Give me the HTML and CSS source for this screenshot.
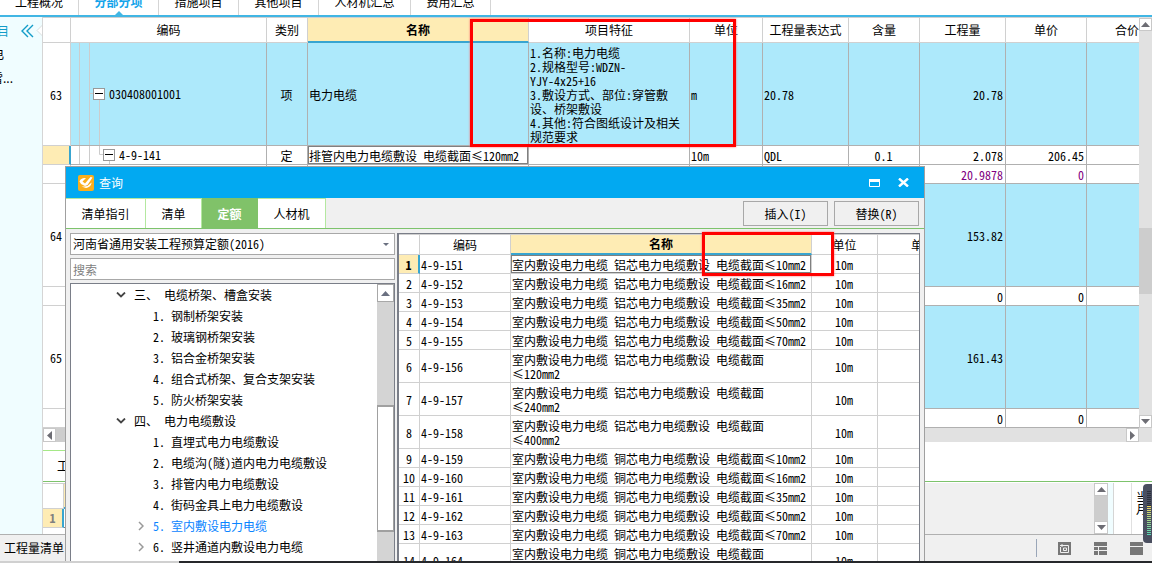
FILE: index.html
```
<!DOCTYPE html>
<html lang="zh-CN">
<head>
<meta charset="utf-8">
<title>分部分项</title>
<link rel="stylesheet" href="styles.css">
</head>
<body>
<div class="app">
  <nav class="tabs">
    <button class="tab first">工程概况</button>
    <button class="tab active">分部分项</button>
    <button class="tab">措施项目</button>
    <button class="tab">其他项目</button>
    <button class="tab wide">人材机汇总</button>
    <button class="tab">费用汇总</button>
  </nav>

  <div class="workspace">
    <aside class="side">
      <div class="side-head">
        <span class="side-title">项目</span>
        <svg class="collapse" width="22" height="18" viewBox="0 0 22 18"><path d="M7 3 1 9l6 6M12 3 6 9l6 6" fill="none" stroke="#129cc8" stroke-width="1.4"/><path d="M22 2.500l-6 6 6 6z" fill="#fff" stroke="#d8dede"/></svg>
      </div>
      <div class="side-item power">强电</div>
      <div class="side-item">防雷...</div>
    </aside>

    <main class="content">
      <div class="grid-area">
        <div class="grid-clip">
          <table class="bill">
            <colgroup><col class="b-no"><col class="b-code"><col class="b-kind"><col class="b-name"><col class="b-feat"><col class="b-unit"><col class="b-expr"><col class="b-cont"><col class="b-qty"><col class="b-price"><col class="b-price"></colgroup>
            <thead>
              <tr><th></th><th>编码</th><th>类别</th><th class="current">名称</th><th>项目特征</th><th>单位</th><th>工程量表达式</th><th>含量</th><th>工程量</th><th>单价</th><th>合价</th></tr>
            </thead>
            <tbody>
              <tr class="item"><td class="no">63</td>
                <td class="tree-cell"><div class="node"><svg width="38" height="102" viewBox="0 0 38 102"><path d="M8.500 0v102M18.500 0v102M18.500 50.500h4M28.500 57v45" stroke="#ccc" fill="none"/><rect x="22.500" y="45.500" width="11" height="11" fill="#fff" stroke="#999"/><path d="M24 50.500h8" stroke="#000"/></svg>030408001001</div></td>
                <td class="mid">项</td><td>电力电缆</td>
                <td class="feature">1.名称:电力电缆<br>2.规格型号:WDZN-<br>YJY-4x25+16<br>3.敷设方式、部位:穿管敷<br>设、桥架敷设<br>4.其他:符合图纸设计及相关<br>规范要求</td>
                <td>m</td><td>20.78</td><td></td><td class="num">20.78</td><td></td><td></td></tr>
              <tr class="line"><td class="no picked"></td>
                <td class="tree-cell"><div class="node"><svg width="48" height="18" viewBox="0 0 48 18"><path d="M8.500 0v18M18.500 0v18M28.500 0v8.500h4M38.500 14v4" stroke="#ccc" fill="none"/><rect x="32.500" y="3.500" width="11" height="11" fill="#fff" stroke="#999"/><path d="M34 8.500h8" stroke="#000"/></svg>4-9-141</div></td>
                <td class="mid">定</td><td class="focus">排管内电力电缆敷设 电缆截面<span class="le">≤</span>120mm2</td><td></td><td>10m</td><td>QDL</td><td class="mid">0.1</td><td class="num">2.078</td><td class="num">206.45</td><td></td></tr>
              <tr class="line locked"><td class="no"></td><td></td><td></td><td></td><td></td><td></td><td></td><td></td><td class="num">20.9878</td><td class="num">0</td><td></td></tr>
              <tr class="item"><td class="no">64</td><td></td><td></td><td></td><td></td><td></td><td></td><td></td><td class="num">153.82</td><td></td><td></td></tr>
              <tr class="line"><td class="no"></td><td></td><td></td><td></td><td></td><td></td><td></td><td></td><td class="num">0</td><td class="num">0</td><td></td></tr>
              <tr class="item"><td class="no">65</td><td></td><td></td><td></td><td></td><td></td><td></td><td></td><td class="num">161.43</td><td></td><td></td></tr>
              <tr class="line"><td class="no"></td><td></td><td></td><td></td><td></td><td></td><td></td><td></td><td class="num">0</td><td class="num">0</td><td></td></tr>
            </tbody>
          </table>
        </div>
        <div class="vbar">
          <button class="step" aria-label="向上"><svg width="9" height="5" viewBox="0 0 9 5"><path d="M0 5 4.500 0 9 5z" fill="#6d6d74"/></svg></button>
          <div class="track"><div class="thumb main-thumb"></div></div>
          <button class="step" aria-label="向下"><svg width="9" height="5" viewBox="0 0 9 5"><path d="M0 0 4.500 5 9 0z" fill="#6d6d74"/></svg></button>
        </div>
      </div>
      <div class="hbar">
        <button class="step" aria-label="向左"><svg width="5" height="9" viewBox="0 0 5 9"><path d="M5 0 0 4.500 5 9z" fill="#6d6d74"/></svg></button>
        <div class="htrack"><div class="hthumb"></div></div>
        <button class="step" aria-label="向右"><svg width="5" height="9" viewBox="0 0 5 9"><path d="M0 0 5 4.500 0 9z" fill="#6d6d74"/></svg></button>
      </div>
      <div class="sub-tabs"><button class="sub-tab">工料机显示</button></div>
      <div class="sub-body">
        <div class="mini">
          <div class="mini-row mini-head"><span class="mini-no"></span><span class="mini-name"></span></div>
          <div class="mini-row"><span class="mini-no on">1</span><span class="mini-cell"></span></div>
        </div>
        <div class="sub-fill"></div>
        <div class="vbar sub-bar">
          <button class="step" aria-label="向上"><svg width="9" height="5" viewBox="0 0 9 5"><path d="M0 5 4.500 0 9 5z" fill="#6d6d74"/></svg></button>
          <div class="track solid"></div>
          <button class="step" aria-label="向下"><svg width="9" height="5" viewBox="0 0 9 5"><path d="M0 0 4.500 5 9 0z" fill="#6d6d74"/></svg></button>
        </div>
        <div class="gutter"></div>
        <div class="note"><div class="note-in">当月</div></div>
      </div>
    </main>
  </div>

  <footer class="status">
    <span class="status-text">工程量清单</span>
    <span class="divider"></span>
    <svg class="view" width="13" height="13" viewBox="0 0 13 13"><rect width="13" height="13" fill="#777"/><path d="M4 2v3M2 3.500h8.500v7h-8V5M5.500 6h3v2.500h-3z" fill="none" stroke="#f0f0f0"/></svg>
    <svg class="view" width="13" height="13" viewBox="0 0 13 13" fill="#777"><path d="M0 0h13v4H0zM0 5h4v3H0zM5 5h8v3H5zM0 9h4v4H0zM5 9h8v4H5z"/></svg>
    <svg class="view" width="13" height="13" viewBox="0 0 13 13" fill="#777"><path d="M0 0h13v4H0zM0 5h13v8H0z"/></svg>
  </footer>
  <div class="edge"><div class="edge-light"></div></div>

  <section class="dialog">
    <header class="title">
      <svg width="16" height="16" viewBox="0 0 16 16"><rect width="16" height="16" rx="2" fill="#f9ae1c"/><path d="M1.500 6.500C2 4 5 2.500 8 3L4.500 6.500 7 8.500 12.500 2l2 .5-5 7.500-2.500 1-4-2zM3.500 11.500 8 13c3.500-.5 5.500-3 5.500-5.500L9.500 11l-3 .5z" fill="#fff"/></svg>
      <h1>查询</h1>
      <button class="win" aria-label="最大化"><svg width="11" height="8" viewBox="0 0 11 8"><path d="M.5.5h10v7H.5z" fill="none" stroke="#fff"/><path d="M0 0h11v3H0z" fill="#fff"/></svg></button>
      <button class="win" aria-label="关闭"><svg width="11" height="9" viewBox="0 0 11 9"><path d="M1 .5l9 8M10 .5l-9 8" stroke="#fff" stroke-width="2.400"/></svg></button>
    </header>
    <div class="dlg-tabs">
      <button class="dlg-tab t-guide">清单指引</button><button class="dlg-tab t-list">清单</button><button class="dlg-tab t-list on">定额</button><button class="dlg-tab t-res">人材机</button>
      <div class="actions"><button class="action">插入(I)</button><button class="action">替换(R)</button></div>
    </div>
    <div class="dlg-body">
      <div class="left">
        <div class="library-wrap"><select class="field library" aria-label="定额库"><option>河南省通用安装工程预算定额(2016)</option></select></div>
        <input class="field search" type="text" placeholder="搜索" aria-label="搜索">
        <div class="tree-box">
          <ul class="tree">
            <li class="chapter"><svg width="10" height="6" viewBox="0 0 10 6"><path d="M1 .5l4 4 4-4" fill="none" stroke="#444" stroke-width="1.800"/></svg>三、 电缆桥架、槽盒安装</li>
            <li class="section">1. 钢制桥架安装</li>
            <li class="section">2. 玻璃钢桥架安装</li>
            <li class="section">3. 铝合金桥架安装</li>
            <li class="section">4. 组合式桥架、复合支架安装</li>
            <li class="section">5. 防火桥架安装</li>
            <li class="chapter"><svg width="10" height="6" viewBox="0 0 10 6"><path d="M1 .5l4 4 4-4" fill="none" stroke="#444" stroke-width="1.800"/></svg>四、 电力电缆敷设</li>
            <li class="section">1. 直埋式电力电缆敷设</li>
            <li class="section">2. 电缆沟(隧)道内电力电缆敷设</li>
            <li class="section">3. 排管内电力电缆敷设</li>
            <li class="section">4. 街码金具上电力电缆敷设</li>
            <li class="section folder chosen"><svg width="6" height="10" viewBox="0 0 6 10"><path d="M1 1l4 4-4 4" fill="none" stroke="#999" stroke-width="1.500"/></svg>5. 室内敷设电力电缆</li>
            <li class="section folder"><svg width="6" height="10" viewBox="0 0 6 10"><path d="M1 1l4 4-4 4" fill="none" stroke="#999" stroke-width="1.500"/></svg>6. 竖井通道内敷设电力电缆</li>
          </ul>
          <div class="tree-bar">
            <button class="tree-up" aria-label="向上"><svg width="9" height="5" viewBox="0 0 9 5"><path d="M0 5 4.500 0 9 5z" fill="#6a7080"/></svg></button>
            <div class="tree-thumb"></div>
          </div>
        </div>
      </div>
      <div class="quota-box">
        <table class="quota">
          <colgroup><col class="q-no"><col class="q-code"><col class="q-name"><col class="q-unit"><col class="q-price"></colgroup>
          <thead><tr><th></th><th>编码</th><th class="current">名称</th><th>单位</th><th>单价</th></tr></thead>
          <tbody>
            <tr><td class="no picked">1</td><td>4-9-151</td><td class="focus">室内敷设电力电缆 铝芯电力电缆敷设 电缆截面<span class="le">≤</span>10mm2</td><td class="mid">10m</td><td></td></tr>
            <tr><td class="no">2</td><td>4-9-152</td><td>室内敷设电力电缆 铝芯电力电缆敷设 电缆截面<span class="le">≤</span>16mm2</td><td class="mid">10m</td><td></td></tr>
            <tr><td class="no">3</td><td>4-9-153</td><td>室内敷设电力电缆 铝芯电力电缆敷设 电缆截面<span class="le">≤</span>35mm2</td><td class="mid">10m</td><td></td></tr>
            <tr><td class="no">4</td><td>4-9-154</td><td>室内敷设电力电缆 铝芯电力电缆敷设 电缆截面<span class="le">≤</span>50mm2</td><td class="mid">10m</td><td></td></tr>
            <tr><td class="no">5</td><td>4-9-155</td><td>室内敷设电力电缆 铝芯电力电缆敷设 电缆截面<span class="le">≤</span>70mm2</td><td class="mid">10m</td><td></td></tr>
            <tr class="two"><td class="no">6</td><td>4-9-156</td><td>室内敷设电力电缆 铝芯电力电缆敷设 电缆截面<br><span class="le">≤</span>120mm2</td><td class="mid">10m</td><td></td></tr>
            <tr class="two"><td class="no">7</td><td>4-9-157</td><td>室内敷设电力电缆 铝芯电力电缆敷设 电缆截面<br><span class="le">≤</span>240mm2</td><td class="mid">10m</td><td></td></tr>
            <tr class="two"><td class="no">8</td><td>4-9-158</td><td>室内敷设电力电缆 铝芯电力电缆敷设 电缆截面<br><span class="le">≤</span>400mm2</td><td class="mid">10m</td><td></td></tr>
            <tr><td class="no">9</td><td>4-9-159</td><td>室内敷设电力电缆 铜芯电力电缆敷设 电缆截面<span class="le">≤</span>10mm2</td><td class="mid">10m</td><td></td></tr>
            <tr><td class="no">10</td><td>4-9-160</td><td>室内敷设电力电缆 铜芯电力电缆敷设 电缆截面<span class="le">≤</span>16mm2</td><td class="mid">10m</td><td></td></tr>
            <tr><td class="no">11</td><td>4-9-161</td><td>室内敷设电力电缆 铜芯电力电缆敷设 电缆截面<span class="le">≤</span>35mm2</td><td class="mid">10m</td><td></td></tr>
            <tr><td class="no">12</td><td>4-9-162</td><td>室内敷设电力电缆 铜芯电力电缆敷设 电缆截面<span class="le">≤</span>50mm2</td><td class="mid">10m</td><td></td></tr>
            <tr><td class="no">13</td><td>4-9-163</td><td>室内敷设电力电缆 铜芯电力电缆敷设 电缆截面<span class="le">≤</span>70mm2</td><td class="mid">10m</td><td></td></tr>
            <tr class="two"><td class="no">14</td><td>4-9-164</td><td>室内敷设电力电缆 铜芯电力电缆敷设 电缆截面<br><span class="le">≤</span>120mm2</td><td class="mid">10m</td><td></td></tr>
          </tbody>
        </table>
      </div>
    </div>
  </section>

  <div class="mark mark-feature"></div>
  <div class="mark mark-size"></div>
  <div class="meter"><div class="meter-dark"></div><div class="meter-lit"></div></div>
</div>
</body>
</html>
```
FILE: styles.css
```
* { box-sizing: border-box; }
body, h1, ul { margin: 0; padding: 0; }
body, button, input, select {
  font-family: "Noto Sans Mono CJK SC", "Noto Sans CJK SC", sans-serif;
  font-size: 12px;
  line-height: 14px;
  color: #000;
}
button { border: 0; padding: 0; background: none; }
svg { display: block; flex: none; }
h1 { font-size: 12px; font-weight: 400; }

.app {
  position: relative;
  display: flex;
  flex-direction: column;
  height: 100vh;
  overflow: hidden;
  background: #fff;
}

/* top tabs */
.tabs {
  display: flex;
  align-items: flex-end;
  flex: none;
  height: 17px;
  border-bottom: 2px solid #41b6e4;
  overflow: hidden;
}
.tab {
  position: relative;
  flex: none;
  width: 80px;
  height: 26px;
  border-right: 1px solid #d5d5d5;
}
.tab.first { width: 79px; }
.tab.wide { width: 92px; }
.tab.active { font-weight: 700; color: #14a4ea; }
.tab.active::after {
  content: "";
  position: absolute;
  left: 36px;
  bottom: 0;
  border: 4px solid transparent;
  border-top: 0;
  border-bottom-color: #41b6e4;
}

.workspace { display: flex; flex: 1; min-height: 0; }

/* left panel */
.side {
  flex: none;
  width: 43px;
  padding-top: 5px;
  overflow: hidden;
  background: #f0fdff;
  border-right: 1px solid #d5d5d5;
}
.side-head { display: flex; align-items: center; height: 18px; }
.side-title { display: flex; justify-content: flex-end; width: 9px; margin-right: 12px; white-space: nowrap; color: #129cc8; }
.side-item { display: flex; justify-content: flex-end; width: 13px; height: 24px; padding-top: 7px; white-space: nowrap; font-family: "Noto Sans CJK SC", sans-serif; }
.side-item.power { width: 4px; }

.content { display: flex; flex-direction: column; flex: 1; min-width: 0; }

/* bill table */
.grid-area { display: flex; flex: none; height: 411px; }
.grid-clip { flex: 1; min-width: 0; overflow: hidden; }
table { table-layout: fixed; border-collapse: separate; border-spacing: 0; }
th, td { padding: 0; font-weight: 400; }
.bill { width: calc(100% + 29px); }
.b-no { width: 28px; }
.b-code { width: 196px; }
.b-kind { width: 41px; }
.b-feat { width: 161px; }
.b-unit { width: 73px; }
.b-expr { width: 86px; }
.b-cont { width: 71px; }
.b-qty { width: 86px; }
.b-price { width: 81px; }
.bill th { height: 26px; border-right: 1px solid #d0d0d0; border-bottom: 1px solid #d0d0d0; border-top: 1px solid #d0d0d0; }
.bill td { padding: 1px 2px 0 1px; border-right: 1px solid #b0b0b0; border-bottom: 1px solid #b0b0b0; }
.bill .no { padding: 1px 1px 0 0; border-color: #d0d0d0; background: #fff; }
.bill .tree-cell { padding: 0; }
.item td { height: 103px; background: #ade9fb; }
.line td { height: 19px; }
.node { display: flex; align-items: center; }
.no, .mid { text-align: center; }
.num { text-align: right; }
.locked { color: #800080; }
.feature { white-space: nowrap; }
th.current { background: #feecb4; font-weight: 700; }
.bill th.current { border-bottom: 2px solid #38a5d0; }
.bill .picked, .quota .picked { background: #feecb4; border-right: 2px solid #38a5d0; font-weight: 700; }
td.focus { box-shadow: inset 0 0 0 1px #808080; white-space: nowrap; }
.le { display: inline-block; width: 12px; text-align: center; }

/* scroll bars */
.vbar { display: flex; flex-direction: column; flex: none; width: 13px; padding-top: 1px; background: #e1e1e1; }
.step { display: flex; align-items: center; justify-content: center; flex: none; width: 13px; height: 13px; background: #fff; border: 1px solid #c8c8c8; }
.track { flex: 1; display: flex; flex-direction: column; justify-content: center; }
.main-thumb { height: 66px; margin-top: 76px; background: #cdcdcd; }
.solid { background: #cdcdcd; }
.hbar { display: flex; flex: none; height: 14px; padding-right: 13px; background: #e1e1e1; }
.hbar .step { height: 14px; }
.htrack { flex: 1; }
.hthumb { width: 60%; height: 14px; background: #cdcdcd; }

/* lower panel */
.sub-tabs { display: flex; align-items: flex-end; flex: none; height: 40px; border-bottom: 1px solid #7dc36c; }
.sub-tab { height: 31px; width: 100px; padding-left: 14px; text-align: left; border-top: 1px solid #a5e887; }
.sub-body { display: flex; flex: 1; min-height: 0; padding-top: 1px; }
.mini { width: 200px; background: #fff; }
.mini-row { display: flex; height: 19px; }
.mini-head { height: 26px; border-top: 1px solid #d0d0d0; }
.mini-no { display: flex; align-items: center; justify-content: center; width: 21px; border-right: 1px solid #d0d0d0; border-bottom: 1px solid #d0d0d0; color: #808080; font-weight: 700; }
.mini-no.on { background: #feecb4; border-right: 2px solid #38a5d0; }
.mini-name { flex: 1; background: #feecb4; border-bottom: 2px solid #38a5d0; }
.mini-cell { flex: 1; border-bottom: 1px solid #808080; }
.sub-fill { flex: 1; background: #f0f0f0; }
.sub-bar { width: 14px; padding: 0; }
.sub-bar .step { width: 14px; }
.gutter { width: 6px; background: #f0fdff; border-right: 1px solid #d5d5d5; }
.note { width: 38px; padding-left: 17px; }
.note-in { height: 100%; padding: 8px 4px; border-left: 1px solid #e0e0e0; width: 21px; line-height: 12px; }

/* status bar */
.status { display: flex; align-items: center; flex: none; height: 27px; padding: 0 9px 0 4px; border-top: 1px solid #b0b0b0; background: #f0f0f0; }
.status-text { flex: 1; }
.divider { width: 1px; height: 18px; margin-right: 21px; background: #9aa6b8; }
.view + .view { margin-left: 23px; }
.edge { flex: none; height: 2px; background: #26282b; }
.edge-light { width: 179px; height: 2px; background: #d0d0d0; }

/* query window */
.dialog {
  position: absolute;
  left: 65px;
  right: 227px;
  top: 166px;
  bottom: 2px;
  display: flex;
  flex-direction: column;
  background: #f0f0f0;
  border: 1px solid #a0a0a0;
  border-bottom: 0;
}
.title { display: flex; align-items: center; flex: none; height: 31px; padding: 0 15px 0 12px; background: #02a9f1; color: #fff; }
.title h1 { flex: 1; margin-left: 5px; }
.win { margin-left: 18px; }
.dlg-tabs { display: flex; flex: none; height: 31px; border-bottom: 1px solid #7dc36c; }
.dlg-tab { height: 30px; background: #fff; border-top: 1px solid #b4e8a0; border-right: 1px solid #b4e8a0; }
.t-guide { width: 80px; }
.t-list { width: 56px; }
.t-res { width: 68px; }
.dlg-tab.on { background: #80c269; border-color: #80c269; color: #fff; font-weight: 700; }
.actions { display: flex; gap: 6px; margin: 3px 5px 0 auto; }
.action { width: 85px; height: 25px; background: #f0f0f0; border: 1px solid #a8a8a8; }
.dlg-body { display: flex; gap: 2px; flex: 1; min-height: 0; padding: 4px 4px 0 4px; }
.left { display: flex; flex-direction: column; flex: none; width: 325px; }
.field { flex: none; width: 100%; height: 22px; margin: 0 0 3px; padding: 0 2px; background: #fff; border: 1px solid #a8a8a8; border-radius: 0; outline: 0; }
.library-wrap { position: relative; display: flex; flex: none; }
.library { appearance: none; }
.library-wrap::after {
  content: "";
  position: absolute;
  right: 6px;
  top: 10px;
  border: 3px solid transparent;
  border-bottom: 0;
  border-top-color: #6a7080;
  pointer-events: none;
}
.search::placeholder { color: #808080; opacity: 1; }
.tree-box { display: flex; flex: 1; min-height: 0; background: #fff; border: 1px solid #7a7e88; border-bottom: 0; overflow: hidden; }
.tree { flex: 1; list-style: none; }
.tree li { display: flex; align-items: center; height: 21px; white-space: pre; }
.tree .chapter { padding-left: 45px; }
.chapter svg { margin-right: 8px; }
.tree .section { padding-left: 82px; }
.tree .folder { padding-left: 67px; }
.folder svg { margin-right: 9px; }
.chosen { color: #0a84ff; }
.tree-bar { width: 17px; background: #d4d4d4; }
.tree-up { display: flex; align-items: center; justify-content: center; width: 17px; height: 18px; background: #fff; border: 1px solid #a8a8a8; }
.tree-thumb { height: 127px; margin-top: 103px; background: #fff; border: 1px solid #a0a0a0; border-width: 2px 1px; }

.quota-box { flex: 1; min-width: 0; overflow: hidden; background: #fff; border: 1px solid #7a7e88; border-width: 1px 1px 0 2px; }
.quota { width: calc(100% + 50px); }
.q-no { width: 21px; }
.q-code { width: 91px; }
.q-unit { width: 66px; }
.q-price { width: 91px; }
.quota th { height: 21px; border-right: 1px solid #d0d0d0; border-bottom: 1px solid #d0d0d0; border-top: 1px solid #d0d0d0; }
.quota th.current { border-bottom: 2px solid #38a5d0; }
.quota td { height: 19px; padding: 1px 2px 0 1px; border-right: 1px solid #d0d0d0; border-bottom: 1px solid #d0d0d0; white-space: nowrap; }
.quota .two td { height: 33px; }
.quota .no { padding: 1px 0 0; }

/* highlights drawn over the grids */
.mark { position: absolute; border: 3px solid #f00; box-shadow: 0 0 2px #f66; }
.mark-feature { left: 470px; top: 19px; width: 266px; height: 128px; }
.mark-size { left: 702px; top: 232px; width: 132px; height: 44px; }

.meter { position: absolute; right: 0; top: 484px; width: 9px; height: 59px; padding: 7px 1px 0 4px; background: #4a4f60; border-radius: 4px 0 0 4px; }
.meter-dark { height: 15px; background: repeating-linear-gradient(#2c303c 0 1px, #4a4f60 1px 2px); }
.meter-lit { height: 30px; background: repeating-linear-gradient(transparent 0 1px, #4a4f60 1px 2px), linear-gradient(#f0d860, #50d8b8); }
```
